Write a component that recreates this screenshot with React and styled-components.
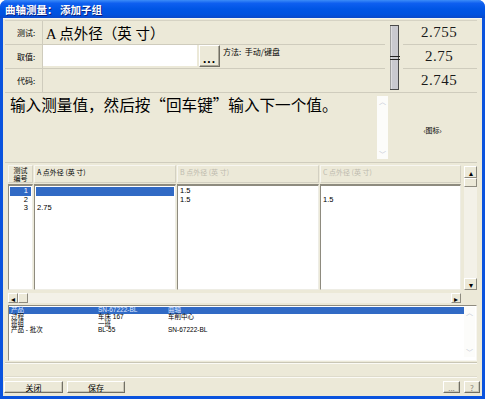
import React from 'react';
import styled, { createGlobalStyle } from 'styled-components';

const GlobalStyle = createGlobalStyle`
  html, body {
    margin: 0;
    padding: 0;
    background: #ffffff;
  }
  body {
    font-family: "Noto Sans CJK SC", "Liberation Sans", sans-serif;
  }
  * { box-sizing: border-box; }
`;

const gridCols = [
  { title: 'A 点外径 (英 寸)', width: 142, active: true, rows: [{ v: '', sel: true }, { v: '' }, { v: '2.75' }] },
  { title: 'B 点外径 (英 寸)', width: 142, active: false, rows: [{ v: '1.5' }, { v: '1.5' }, { v: '' }] },
  { title: 'C 点外径 (英 寸)', width: 141, active: false, rows: [{ v: '' }, { v: '1.5' }, { v: '' }] },
];

const infoRows = [
  ['产品', 'SN-67222-BL', '曲轴'],
  ['过程', '车床 167', '车削中心'],
  ['班组', '一班', ''],
  ['产品 - 批次', 'BL-55', 'SN-67222-BL'],
];

function SliderMark() {
  return (
    <svg width="12" height="66" viewBox="0 0 12 66">
      <rect x="1.5" y="0.5" width="8" height="64" fill="#c9c9cf" stroke="#4a4a4a" />
      <line x1="2" y1="1" x2="2" y2="64" stroke="#f2f2f2" />
      <line x1="1" y1="31.5" x2="11" y2="31.5" stroke="#222" />
      <line x1="1" y1="34.5" x2="11" y2="34.5" stroke="#222" />
    </svg>
  );
}

function App() {
  return (
    <>
      <GlobalStyle />
      <Window>
        <TitleBar>曲轴测量： 添加子组</TitleBar>
        <Body>
          <TopPanel>
            <Fields>
              <FieldRow>
                <FieldLabel>测试:</FieldLabel>
                <BigText>A 点外径（英 寸）</BigText>
              </FieldRow>
              <FieldRow>
                <FieldLabel>取值:</FieldLabel>
                <ValueInput />
                <DotsButton>...</DotsButton>
                <Method>方法:&nbsp;&nbsp;手动/键盘</Method>
              </FieldRow>
              <FieldRow $last>
                <FieldLabel>代码:</FieldLabel>
              </FieldRow>
            </Fields>
            <SliderCell>
              <SliderMark />
            </SliderCell>
            <Numbers>
              <NumberCell>2.755</NumberCell>
              <NumberCell>2.75</NumberCell>
              <NumberCell $last>2.745</NumberCell>
            </Numbers>
          </TopPanel>

          <MessagePanel>
            <MessageText>输入测量值，然后按“回车键”输入下一个值。</MessageText>
            <MsgScroll>
              <FadedArrow>︿</FadedArrow>
              <FadedArrow>﹀</FadedArrow>
            </MsgScroll>
            <IconArea>‹图标›</IconArea>
          </MessagePanel>

          <Grid>
            <GridMain>
              <GridColumns>
                <GridColumn $w={25}>
                  <ColHeader $center>
                    <WrapHead>测试编号</WrapHead>
                  </ColHeader>
                  <ColData>
                    {[1, 2, 3].map((n) => (
                      <DataRow key={n} $sel={n === 1} $right>{n}</DataRow>
                    ))}
                  </ColData>
                </GridColumn>
                {gridCols.map((c) => (
                  <GridColumn key={c.title} $w={c.width}>
                    <ColHeader $dim={!c.active}>{c.title}</ColHeader>
                    <ColData>
                      {c.rows.map((r, i) => (
                        <DataRow key={i} $sel={r.sel}>{r.v}</DataRow>
                      ))}
                    </ColData>
                  </GridColumn>
                ))}
              </GridColumns>
              <HScroll>
                <ArrowBtn>◂</ArrowBtn>
                <Thumb />
                <Track />
                <ArrowBtn>▸</ArrowBtn>
              </HScroll>
            </GridMain>
            <VScroll>
              <ArrowBtn $tall>▴</ArrowBtn>
              <Thumb $tall />
              <Track />
              <ArrowBtn $tall>▾</ArrowBtn>
            </VScroll>
          </Grid>

          <InfoList>
            <ListBody>
              {infoRows.map((r, i) => (
                <ListRow key={i} $sel={i === 0}>
                  <span>{r[0]}</span>
                  <span>{r[1]}</span>
                  <span>{r[2]}</span>
                </ListRow>
              ))}
            </ListBody>
            <ListScroll>
              <FadedArrow>︿</FadedArrow>
              <FadedArrow>﹀</FadedArrow>
            </ListScroll>
          </InfoList>

          <Groove />
          <Groove $faint />

          <ButtonBar>
            <Button $w={59}>关闭</Button>
            <Button $w={58}>保存</Button>
            <Spacer />
            <Button $w={17} $dim>...</Button>
            <Button $w={16} $dim>?</Button>
          </ButtonBar>
        </Body>
      </Window>
    </>
  );
}

const Window = styled.div`
  width: 485px;
  height: 399px;
  display: flex;
  flex-direction: column;
  overflow: hidden;
  background: #0a53de;
  border-radius: 7px 7px 0 0;
`;

const TitleBar = styled.div`
  height: 18px;
  flex: none;
  display: flex;
  align-items: center;
  padding-left: 5px;
  color: #ffffff;
  font: bold 10.5px "Noto Sans CJK SC", sans-serif;
  text-shadow: 1px 1px #0a1e80;
  background: linear-gradient(to bottom, #3c8cf8 0%, #0f5ff0 18%, #0055e5 50%, #0052df 80%, #0a49c9 100%);
`;

const Body = styled.div`
  flex: 1;
  min-height: 0;
  display: flex;
  flex-direction: column;
  margin: 0 3px 3px 3px;
  background: #ece9d8;
  border-top: 1px solid #f7f6ef;
`;

const TopPanel = styled.div`
  display: flex;
  height: 72px;
  margin: 1px 5px 0 2px;
  border-top: 1px solid #d6d3c4;
`;

const Fields = styled.div`
  width: 380px;
  display: flex;
  flex-direction: column;
`;

const FieldRow = styled.div`
  flex: 1;
  display: flex;
  align-items: stretch;
  border-bottom: ${({ $last }) => ($last ? 'none' : '1px solid #cfccbd')};
`;

const FieldLabel = styled.div`
  width: 38px;
  flex: none;
  display: flex;
  align-items: center;
  padding-left: 12px;
  font-size: 8px;
  color: #000;
  border-right: 1px solid #cfccbd;
`;

const BigText = styled.div`
  display: flex;
  align-items: center;
  padding-left: 3px;
  font-family: "Liberation Serif", "Noto Sans CJK SC", serif;
  font-size: 14.5px;
  color: #000;
  white-space: pre;
`;

const ValueInput = styled.div`
  width: 154px;
  height: 21px;
  background: #ffffff;
`;

const DotsButton = styled.div`
  width: 21px;
  height: 22px;
  margin-left: 2px;
  display: flex;
  align-items: flex-end;
  justify-content: center;
  padding-bottom: 2px;
  font: bold 12px "Liberation Sans", sans-serif;
  line-height: 10px;
  letter-spacing: 1px;
  background: #ece9d8;
  border: 1px solid;
  border-color: #ffffff #716f64 #716f64 #ffffff;
  box-shadow: inset -1px -1px #aca899;
`;

const Method = styled.div`
  margin-left: 3px;
  padding-top: 1px;
  font-size: 8px;
  color: #000;
`;

const SliderCell = styled.div`
  width: 18px;
  display: flex;
  align-items: center;
  padding: 3px 0 0 4px;
`;

const Numbers = styled.div`
  width: 74px;
  display: flex;
  flex-direction: column;
`;

const NumberCell = styled.div`
  flex: 1;
  display: flex;
  align-items: center;
  justify-content: center;
  padding-right: 2px;
  font-family: "Liberation Serif", serif;
  font-size: 15px;
  letter-spacing: 0.5px;
  color: #1a1a1a;
  border-bottom: ${({ $last }) => ($last ? 'none' : '1px solid #cfccbd')};
`;

const MessagePanel = styled.div`
  display: flex;
  height: 71px;
  margin: 0 5px 0 2px;
  border-top: 1px solid #cfccbd;
  border-bottom: 1px solid #cfccbd;
`;

const MessageText = styled.div`
  width: 372px;
  padding: 1px 0 0 5px;
  font-size: 15.6px;
  line-height: 20px;
  color: #000;
`;

const MsgScroll = styled.div`
  width: 11px;
  margin: 3px 0 3px 0;
  display: flex;
  flex-direction: column;
  justify-content: space-between;
  background: #fcfcfa;
`;

const FadedArrow = styled.div`
  height: 10px;
  display: flex;
  align-items: center;
  justify-content: center;
  font-size: 7px;
  color: #c3c7d3;
`;

const IconArea = styled.div`
  flex: 1;
  display: flex;
  align-items: center;
  justify-content: center;
  padding-top: 4px;
  font-size: 7px;
  color: #000;
`;

const Grid = styled.div`
  display: flex;
  gap: 3px;
  height: 139px;
  margin: 1px 5px 0 5px;
`;

const GridMain = styled.div`
  width: 453px;
  display: flex;
  flex-direction: column;
`;

const GridColumns = styled.div`
  flex: 1;
  display: flex;
  gap: 1px;
`;

const GridColumn = styled.div`
  width: ${({ $w }) => $w}px;
  display: flex;
  flex-direction: column;
`;

const ColHeader = styled.div`
  height: 18px;
  margin-top: 1px;
  display: flex;
  flex-direction: column;
  align-items: ${({ $center }) => ($center ? 'center' : 'flex-start')};
  padding: ${({ $center }) => ($center ? '0' : '2px 2px 0')};
  font-size: 7px;
  line-height: 8px;
  color: ${({ $dim }) => ($dim ? '#bdbaae' : '#000')};
  border: 1px solid;
  border-color: #f7f6f1 #d3d0c2 #d3d0c2 #f7f6f1;
`;

const WrapHead = styled.div`
  width: 15px;
  font-size: 7px;
  line-height: 8px;
  word-break: break-all;
  text-align: center;
`;

const ColData = styled.div`
  flex: 1;
  margin-top: 1px;
  padding: 1px 1px 0;
  background: #ffffff;
  border-top: 2px solid #8e8b7f;
  border-left: 1px solid #8e8b7f;
  border-right: 1px solid #eeede5;
  border-bottom: 1px solid #eeede5;
`;

const DataRow = styled.div`
  height: 8.5px;
  padding: ${({ $right }) => ($right ? '0 3px 0 0' : '0 0 0 1px')};
  text-align: ${({ $right }) => ($right ? 'right' : 'left')};
  font-family: "Liberation Sans", "Noto Sans CJK SC", sans-serif;
  font-size: 7.5px;
  line-height: 8.5px;
  color: ${({ $sel }) => ($sel ? '#ffffff' : '#000')};
  background: ${({ $sel }) => ($sel ? '#316ac5' : 'transparent')};
`;

const HScroll = styled.div`
  height: 10px;
  margin-top: 3px;
  display: flex;
`;

const VScroll = styled.div`
  width: 13px;
  margin: 2px 0 13px;
  display: flex;
  flex-direction: column;
`;

const ArrowBtn = styled.div`
  flex: none;
  width: ${({ $tall }) => ($tall ? '13px' : '10px')};
  height: ${({ $tall }) => ($tall ? '12px' : '10px')};
  display: flex;
  align-items: center;
  justify-content: center;
  font-size: 8px;
  color: #000;
  background: #ece9d8;
  border: 1px solid;
  border-color: #ffffff #8e8b7f #8e8b7f #ffffff;
`;

const Thumb = styled.div`
  flex: none;
  width: ${({ $tall }) => ($tall ? '13px' : '10px')};
  height: ${({ $tall }) => ($tall ? '9px' : '10px')};
  background: #ece9d8;
  border: 1px solid;
  border-color: #ffffff #8e8b7f #8e8b7f #ffffff;
`;

const Track = styled.div`
  flex: 1;
  background: #f3f1e8;
`;

const InfoList = styled.div`
  display: flex;
  height: 56px;
  margin: 2px 5px 0 5px;
  background: #ffffff;
  border: 1px solid;
  border-color: #8e8b7f #f7f6f1 #f7f6f1 #8e8b7f;
`;

const ListBody = styled.div`
  flex: 1;
  padding-top: 1px;
`;

const ListRow = styled.div`
  display: grid;
  grid-template-columns: 87px 70px 1fr;
  height: 6.8px;
  padding-left: 2px;
  font-size: 6.5px;
  line-height: 6.8px;
  color: ${({ $sel }) => ($sel ? '#dfe8ff' : '#000')};
  background: ${({ $sel }) => ($sel ? '#316ac5' : 'transparent')};
  span {
    font-family: "Liberation Sans", "Noto Sans CJK SC", sans-serif;
    white-space: nowrap;
  }
`;

const ListScroll = styled.div`
  width: 11px;
  margin: 1px 1px 3px 0;
  display: flex;
  flex-direction: column;
  justify-content: space-between;
  background: #fcfcfa;
`;

const Groove = styled.div`
  height: 2px;
  margin: ${({ $faint }) => ($faint ? '12px 5px 0 2px' : '1px 5px 0 2px')};
  border-top: 1px solid ${({ $faint }) => ($faint ? '#dedbcc' : '#c9c6b6')};
  border-bottom: 1px solid #fbfaf5;
`;

const ButtonBar = styled.div`
  margin-top: auto;
  display: flex;
  gap: 4px;
  padding: 0 2px 3px 1px;
`;

const Spacer = styled.div`
  flex: 1;
`;

const Button = styled.div`
  width: ${({ $w }) => $w}px;
  height: 12px;
  display: flex;
  align-items: center;
  justify-content: center;
  font-size: 8px;
  color: ${({ $dim }) => ($dim ? '#8a877a' : '#000')};
  background: #ece9d8;
  border: 1px solid;
  border-color: #ffffff #716f64 #716f64 #ffffff;
  box-shadow: inset -1px -1px #c9c6b6;
`;

export default App;
